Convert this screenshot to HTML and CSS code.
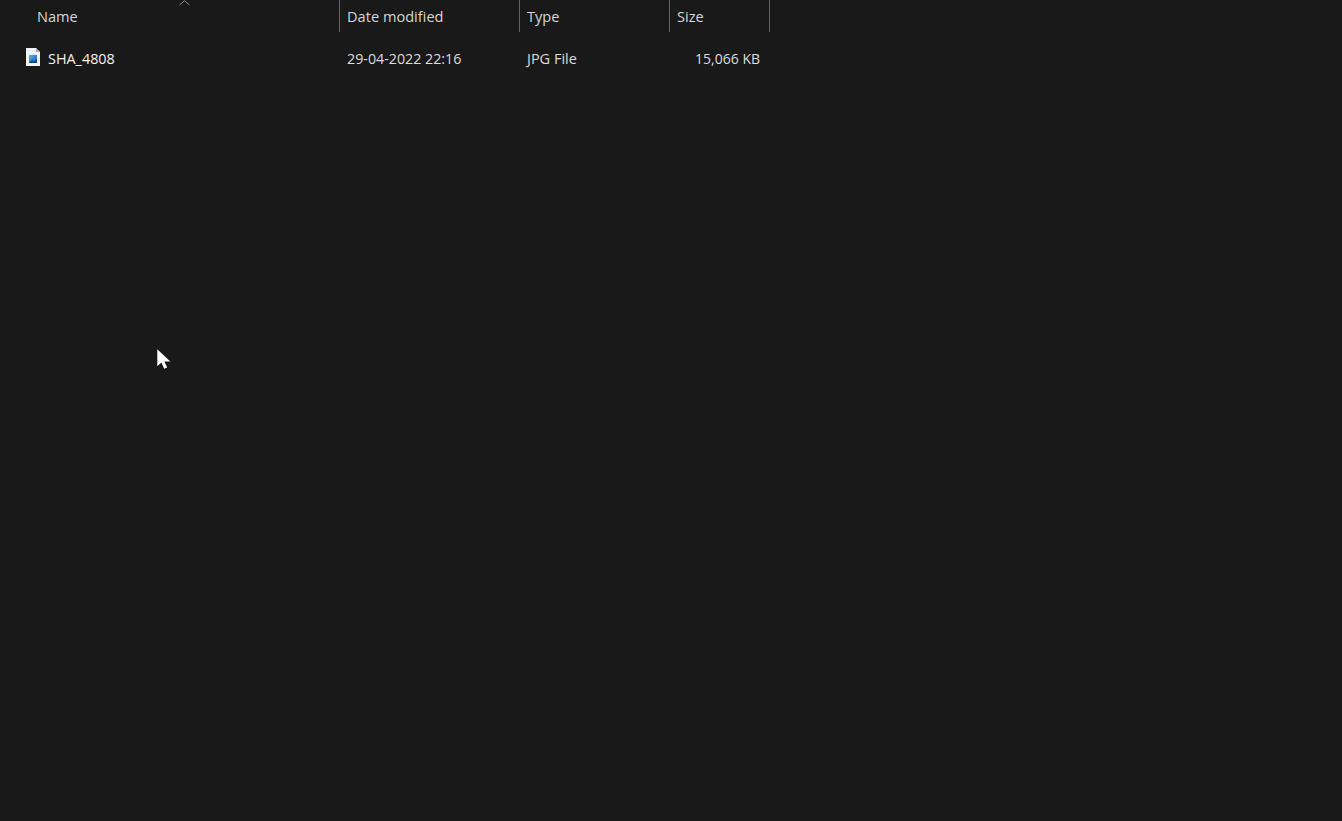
FILE: index.html
```html
<!DOCTYPE html>
<html lang="en">
<head>
<meta charset="utf-8">
<title>File list</title>
<link rel="stylesheet" href="styles.css">
</head>
<body>
<main class="list">
  <div class="header">
    <div class="col col-name">Name
      <svg class="sort" width="11" height="6" viewBox="0 0 11 6"><path d="M.5 5 5.500.7 10.500 5" fill="none" stroke="#8f8f8f" stroke-width="1"/></svg>
    </div>
    <div class="col col-date">Date modified</div>
    <div class="col col-type">Type</div>
    <div class="col col-size">Size</div>
  </div>
  <div class="row">
    <div class="cell cell-name">
      <svg class="file" width="14" height="18" viewBox="0 0 14 18">
        <defs>
          <linearGradient id="pic" x1="0" y1="0" x2="1" y2="1">
            <stop offset="0" stop-color="#5fb4ea"/>
            <stop offset="1" stop-color="#0f5aa8"/>
          </linearGradient>
        </defs>
        <path d="M0 0h10l4 4v14H0z" fill="#f1f4f7"/>
        <path d="M10 0v4h4z" fill="#a4adb5"/>
        <rect x="3" y="7" width="8" height="8" fill="url(#pic)"/>
        <path d="M3 15l3-3 2 1.500 3-2.500v4z" fill="#0d4a8c"/>
      </svg>
      <span class="file-name">SHA_4808</span>
    </div>
    <div class="cell cell-date">29-04-2022 22:16</div>
    <div class="cell cell-type">JPG File</div>
    <div class="cell cell-size">15,066 KB</div>
  </div>
</main>
<svg class="cursor" width="14" height="22" viewBox="0 0 14 22">
  <path d="M.3.300V17.300l4.100-3.900 2.800 6.400 3-1.300-2.800-6.100h5.900z" fill="#fff"/>
</svg>
</body>
</html>
```
FILE: styles.css
```css
html, body {
  margin: 0;
  height: 100%;
  background: #191919;
  overflow: hidden;
}
body {
  font-family: "Open Sans", "Noto Sans", sans-serif;
  font-size: 14px;
  position: relative;
}
.list {
  width: 770px;
}
.header, .row {
  display: grid;
  grid-template-columns: 340px 180px 150px 100px;
}
.header {
  height: 32px;
  color: #d6d6d6;
  font-size: 14.6px;
}
.col {
  position: relative;
  display: flex;
  align-items: center;
  padding-left: 7px;
  border-right: 1px solid #636363;
  box-sizing: border-box;
  height: 32px;
}
.col-name {
  padding-left: 37px;
}
.sort {
  position: absolute;
  left: 179px;
  top: 0;
}
.row {
  margin-top: 15px;
  height: 22px;
  align-items: center;
  color: #dcdcdc;
}
.cell {
  padding-left: 7px;
  white-space: nowrap;
}
.cell-name {
  display: flex;
  align-items: center;
  gap: 8px;
  padding-left: 26px;
  color: #f2f2f2;
}
.file-name {
  font-size: 14.4px;
}
.file {
  margin-top: -3px;
}
.cell-date {
  font-size: 14.25px;
}
.cell-type {
  font-size: 14.5px;
}
.cell-size {
  text-align: right;
  padding-right: 10px;
}
.cursor {
  position: absolute;
  left: 157px;
  top: 349px;
}
```
